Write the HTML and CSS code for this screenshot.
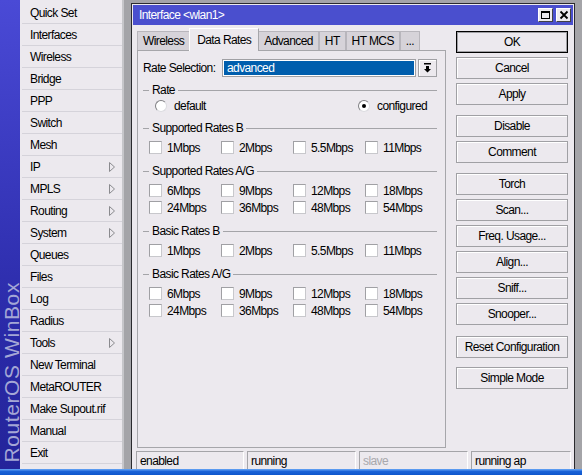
FILE: index.html
```html
<!DOCTYPE html>
<html>
<head>
<meta charset="utf-8">
<link rel="stylesheet" href="styles.css">
</head>
<body>
<div class="screen">
  <aside class="sidebar">
    <div class="brand"><span>RouterOS WinBox</span></div>
    <ul class="menu">
      <li>Quick Set</li>
      <li>Interfaces</li>
      <li>Wireless</li>
      <li>Bridge</li>
      <li>PPP</li>
      <li>Switch</li>
      <li>Mesh</li>
      <li>IP<svg class="sub" width="6" height="10" viewBox="0 0 6 10"><polygon points="0.5,0.5 5.5,5 0.5,9.5" /></svg></li>
      <li>MPLS<svg class="sub" width="6" height="10" viewBox="0 0 6 10"><polygon points="0.5,0.5 5.5,5 0.5,9.5" /></svg></li>
      <li>Routing<svg class="sub" width="6" height="10" viewBox="0 0 6 10"><polygon points="0.5,0.5 5.5,5 0.5,9.5" /></svg></li>
      <li>System<svg class="sub" width="6" height="10" viewBox="0 0 6 10"><polygon points="0.5,0.5 5.5,5 0.5,9.5" /></svg></li>
      <li>Queues</li>
      <li>Files</li>
      <li>Log</li>
      <li>Radius</li>
      <li>Tools<svg class="sub" width="6" height="10" viewBox="0 0 6 10"><polygon points="0.5,0.5 5.5,5 0.5,9.5" /></svg></li>
      <li>New Terminal</li>
      <li>MetaROUTER</li>
      <li>Make Supout.rif</li>
      <li>Manual</li>
      <li>Exit</li>
    </ul>
  </aside>
  <div class="desktop">
    <div class="window">
      <div class="titlebar">
        <span class="title">Interface &lt;wlan1&gt;</span>
        <div class="tb-btns">
          <div class="tb-btn"><svg width="11" height="10" viewBox="0 0 11 10"><rect x="1.5" y="1.5" width="8" height="7" fill="none" stroke="#000" stroke-width="1"/><rect x="1" y="1" width="9" height="2" fill="#000"/></svg></div>
          <div class="tb-btn"><svg width="10" height="10" viewBox="0 0 10 10"><path d="M1.5 1.5L8.5 8.5M8.5 1.5L1.5 8.5" stroke="#000" stroke-width="1.8"/></svg></div>
        </div>
      </div>
      <div class="win-body">
        <div class="main">
          <div class="tabs">
            <div class="tab">Wireless</div>
            <div class="tab active">Data Rates</div>
            <div class="tab">Advanced</div>
            <div class="tab">HT</div>
            <div class="tab">HT MCS</div>
            <div class="tab">...</div>
          </div>
          <div class="panel">
            <div class="select-row">
              <span class="field-label">Rate Selection:</span>
              <div class="select">advanced</div>
              <div class="drop-btn"><svg width="7" height="10" viewBox="0 0 7 10"><rect x="0" y="0" width="7" height="1.5" fill="#000"/><path d="M2 3h3v3h2l-3.5 3.5L0 6h2z" fill="#000"/></svg></div>
            </div>

            <div class="group first">
              <div class="group-title"><span>Rate</span></div>
              <div class="radio-row">
                <label class="radio"><span class="dot"></span>default</label>
                <label class="radio"><span class="dot on"></span>configured</label>
              </div>
            </div>

            <div class="group">
              <div class="group-title"><span>Supported Rates B</span></div>
              <div class="check-row">
                <label class="check"><span class="box"></span>1Mbps</label>
                <label class="check"><span class="box"></span>2Mbps</label>
                <label class="check"><span class="box"></span>5.5Mbps</label>
                <label class="check"><span class="box"></span>11Mbps</label>
              </div>
            </div>

            <div class="group">
              <div class="group-title"><span>Supported Rates A/G</span></div>
              <div class="check-row">
                <label class="check"><span class="box"></span>6Mbps</label>
                <label class="check"><span class="box"></span>9Mbps</label>
                <label class="check"><span class="box"></span>12Mbps</label>
                <label class="check"><span class="box"></span>18Mbps</label>
              </div>
              <div class="check-row">
                <label class="check"><span class="box"></span>24Mbps</label>
                <label class="check"><span class="box"></span>36Mbps</label>
                <label class="check"><span class="box"></span>48Mbps</label>
                <label class="check"><span class="box"></span>54Mbps</label>
              </div>
            </div>

            <div class="group">
              <div class="group-title"><span>Basic Rates B</span></div>
              <div class="check-row">
                <label class="check"><span class="box"></span>1Mbps</label>
                <label class="check"><span class="box"></span>2Mbps</label>
                <label class="check"><span class="box"></span>5.5Mbps</label>
                <label class="check"><span class="box"></span>11Mbps</label>
              </div>
            </div>

            <div class="group">
              <div class="group-title"><span>Basic Rates A/G</span></div>
              <div class="check-row">
                <label class="check"><span class="box"></span>6Mbps</label>
                <label class="check"><span class="box"></span>9Mbps</label>
                <label class="check"><span class="box"></span>12Mbps</label>
                <label class="check"><span class="box"></span>18Mbps</label>
              </div>
              <div class="check-row">
                <label class="check"><span class="box"></span>24Mbps</label>
                <label class="check"><span class="box"></span>36Mbps</label>
                <label class="check"><span class="box"></span>48Mbps</label>
                <label class="check"><span class="box"></span>54Mbps</label>
              </div>
            </div>
          </div>
        </div>
        <div class="buttons">
          <div class="btn default">OK</div>
          <div class="btn">Cancel</div>
          <div class="btn">Apply</div>
          <div class="btn sep">Disable</div>
          <div class="btn">Comment</div>
          <div class="btn sep">Torch</div>
          <div class="btn">Scan...</div>
          <div class="btn">Freq. Usage...</div>
          <div class="btn">Align...</div>
          <div class="btn">Sniff...</div>
          <div class="btn">Snooper...</div>
          <div class="btn sep-l">Reset Configuration</div>
          <div class="btn sep-s">Simple Mode</div>
        </div>
      </div>
      <div class="statusbar">
        <div class="cell">enabled</div>
        <div class="cell">running</div>
        <div class="cell dim">slave</div>
        <div class="cell">running ap</div>
      </div>
    </div>
  </div>
</div>
<div class="taskbar"></div>
</body>
</html>
```

FILE: styles.css
```css
* { box-sizing: border-box; }
html, body { margin: 0; padding: 0; }
body {
  width: 582px;
  height: 475px;
  overflow: hidden;
  background: #a4a4a8;
  font-family: "Liberation Sans", Arial, sans-serif;
  font-size: 12px;
  letter-spacing: -0.6px;
  color: #000;
}

.screen { display: flex; height: 469px; }

/* ---------- sidebar ---------- */
.sidebar {
  display: flex;
  width: 124px;
  border-right: 2px solid #c6c6ca;
  flex: none;
}
.brand {
  width: 20px;
  flex: none;
  background: linear-gradient(#4a4ad6, #2a2aa8 70%, #24249a);
  display: flex;
  flex-direction: column;
  justify-content: flex-end;
  align-items: flex-start;
  padding: 0 0 6px 2px;
}
.brand span {
  writing-mode: vertical-rl;
  transform: rotate(180deg);
  width: 20px;
  font-size: 21px;
  line-height: 20px;
  letter-spacing: 0.6px;
  white-space: nowrap;
  color: #a4a7d6;
}
.menu {
  flex: 1;
  list-style: none;
  margin: 0;
  padding: 2px 0 0 2px;
  background: #ece9ee;
}
.menu li {
  height: 22px;
  border-bottom: 1px solid #d5d3da;
  display: flex;
  align-items: center;
  justify-content: space-between;
  padding: 0 7px 0 8px;
  white-space: nowrap;
}
.menu .sub polygon { fill: none; stroke: #8a8a8e; stroke-width: 1; }

/* ---------- desktop / window ---------- */
.desktop {
  flex: 1;
  padding: 3px 0 0 7px;
  overflow: hidden;
}
.window {
  width: 444px;
  height: 480px;
  border: 1px solid #2a2a2e;
  padding: 1px;
  background: #ece9ee;
}
.titlebar {
  height: 20px;
  background: #4a4fce;
  display: flex;
  align-items: center;
  justify-content: space-between;
  padding: 0 2px 0 6px;
}
.title { color: #fff; }
.tb-btns { display: flex; gap: 3px; }
.tb-btn {
  width: 15px;
  height: 14px;
  background: #ece9ee;
  border: 1px solid;
  border-color: #fff #404044 #404044 #fff;
  display: flex;
  align-items: center;
  justify-content: center;
}

.win-body {
  display: flex;
  gap: 10px;
  padding: 3px 5px 0 4px;
}
.main { width: 309px; flex: none; }

.tabs {
  display: flex;
  align-items: flex-end;
  height: 22px;
}
.tab {
  height: 19px;
  padding: 0 5px;
  background: #d6d3d9;
  border: 1px solid #b8b6bc;
  border-bottom: none;
  display: flex;
  align-items: center;
  white-space: nowrap;
}
.tab.active {
  height: 23px;
  margin: 0 -1px -1px;
  padding: 0 7px;
  background: #ece9ee;
  border-color: #fff #a6a6aa #a6a6aa #fff;
  position: relative;
  z-index: 1;
}

.panel {
  height: 398px;
  border: 1px solid #a6a6aa;
  padding: 8px 8px 0 5px;
}

.select-row {
  display: flex;
  align-items: center;
  height: 18px;
}
.field-label { width: 79px; flex: none; }
.select {
  width: 194px;
  height: 18px;
  border: 1px solid #a0a0a4;
  box-shadow: inset 0 0 0 1px #fff;
  background: #005ead;
  color: #fff;
  padding: 0 4px;
  display: flex;
  align-items: center;
}
.drop-btn {
  width: 19px;
  height: 18px;
  margin-left: 2px;
  border: 1px solid #a0a0a4;
  box-shadow: inset 1px 1px #fff;
  display: flex;
  align-items: center;
  justify-content: center;
}

.group { margin-top: 7px; }
.group.first { margin-top: 5px; }
.group-title {
  height: 16px;
  display: flex;
  align-items: center;
  margin-bottom: 3px;
}
.group.first .group-title { margin-bottom: 0; }
.group-title::before {
  content: "";
  width: 6px;
  height: 1px;
  background: #a4a4a8;
  margin-right: 3px;
}
.group-title::after {
  content: "";
  flex: 1;
  height: 1px;
  background: #a4a4a8;
  margin-left: 3px;
}

.radio-row {
  display: grid;
  grid-template-columns: 203px auto;
  height: 15px;
  padding-left: 12px;
  align-items: center;
}
.radio { display: flex; align-items: center; }
.dot {
  width: 12px;
  height: 12px;
  border-radius: 50%;
  background: #fff;
  border: 1px solid;
  border-color: #808084 #dcdce0 #dcdce0 #808084;
  margin-right: 7px;
  display: flex;
  align-items: center;
  justify-content: center;
}
.dot.on::after {
  content: "";
  width: 4px;
  height: 4px;
  border-radius: 50%;
  background: #000;
}

.check-row {
  display: grid;
  grid-template-columns: repeat(4, 72px);
  height: 17px;
  padding-left: 6px;
  align-items: center;
}
.check { display: flex; align-items: center; white-space: nowrap; }
.box {
  width: 13px;
  height: 13px;
  background: #fff;
  border: 1px solid;
  border-color: #a0a0a4 #c8c8cc #c8c8cc #a0a0a4;
  margin-right: 5px;
  flex: none;
}

/* ---------- buttons ---------- */
.buttons {
  width: 112px;
  flex: none;
  display: flex;
  flex-direction: column;
  gap: 4px;
  padding-top: 3px;
}
.btn {
  height: 22px;
  border: 1px solid #a0a0a4;
  box-shadow: inset 1px 1px #fff;
  display: flex;
  align-items: center;
  justify-content: center;
  white-space: nowrap;
}
.btn.default {
  border-color: #000;
  box-shadow: inset 0 0 0 1px #a0a0a4;
}
.btn.sep { margin-top: 6px; }
.btn.sep-l { margin-top: 7px; }
.btn.sep-s { margin-top: 5px; }

/* ---------- status bar ---------- */
.statusbar {
  display: grid;
  grid-template-columns: 108px 109px 109px 1fr;
  gap: 3px;
  height: 18px;
  margin: 3px 2px 0 3px;
}
.cell {
  border-top: 1px solid #a4a4a8;
  border-left: 1px solid #a4a4a8;
  border-right: 1px solid #fff;
  padding-left: 3px;
  display: flex;
  align-items: center;
  white-space: nowrap;
}
.cell.dim { color: #a8a8ac; }

.taskbar {
  height: 6px;
  background: linear-gradient(#5a9af0 0, #5a9af0 1px, #1c64d8 2px, #0e56cc);
}
```
